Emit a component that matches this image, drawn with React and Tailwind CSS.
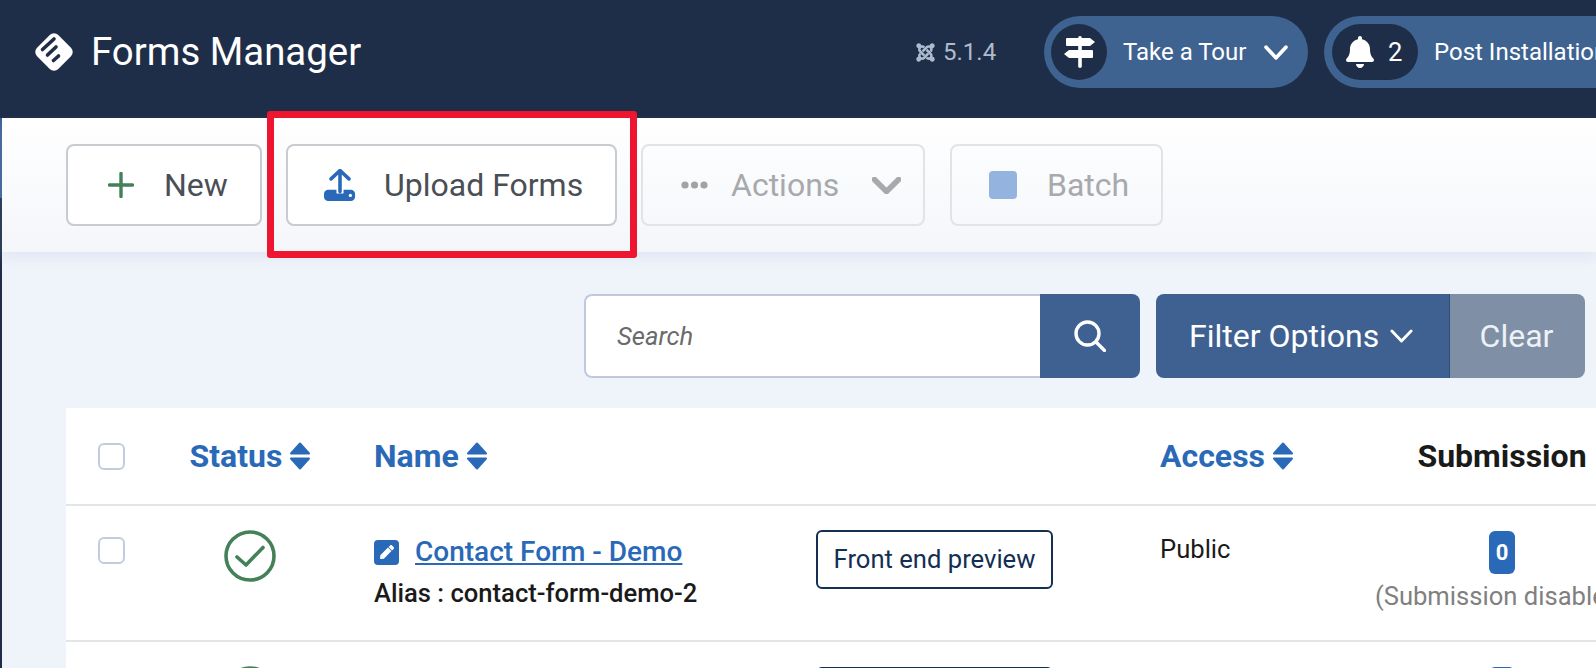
import React from "react";
import { FaBell, FaJoomla, FaPen } from "react-icons/fa";

const Chevron = ({ className, sw = 3.5 }) => (
  <svg viewBox="0 0 24 14" className={className} fill="none" stroke="currentColor" strokeWidth={sw} strokeLinecap="round" strokeLinejoin="round" preserveAspectRatio="none">
    <path d="M2 2 L12 12 L22 2" />
  </svg>
);

const Sort = () => (
  <svg viewBox="0 0 20 28" className="w-[20px] h-[28px] shrink-0 text-[#2a69b8]" fill="currentColor" stroke="currentColor" strokeWidth="2" strokeLinejoin="round">
    <path d="M10 1.5 L19 11.5 H1 Z" />
    <path d="M1 16.5 H19 L10 26.5 Z" />
  </svg>
);

const Logo = () => (
  <svg viewBox="0 0 40 40" className="w-[40px] h-[40px] shrink-0">
    <rect x="5" y="5" width="30" height="30" rx="6" transform="rotate(45 20 20)" fill="#fff" />
    <g stroke="#1f2e48" strokeWidth="3.6" strokeLinecap="round">
      <path d="M8.5 17.5 L20 7" />
      <path d="M13.5 23 L22 15" />
      <path d="M19.5 28.5 L24.5 24" />
    </g>
  </svg>
);

const UploadIcon = () => (
  <svg viewBox="7 7 34 35" className="w-[32px] h-[33px] shrink-0">
    <rect x="7" y="29" width="33" height="12" rx="4.5" fill="#2a69b8" />
    <path d="M24 33 V9" stroke="#fff" strokeWidth="7.5" />
    <path d="M24 31 V9 M14.5 17.5 L24 8.5 L33.5 17.5" fill="none" stroke="#2a69b8" strokeWidth="3.8" strokeLinecap="round" strokeLinejoin="round" />
    <circle cx="35" cy="35" r="1.7" fill="#fff" />
  </svg>
);

const SignIcon = () => (
  <svg viewBox="0 0 31 32" className="w-[31px] h-[32px]" fill="#fff">
    <rect x="14.2" y="0" width="3.6" height="32" rx="1.8" />
    <path d="M3 2 H26 L31 6 L26 10 H3 a1 1 0 0 1 -1 -1 V3 a1 1 0 0 1 1 -1 Z" />
    <path d="M5 14 H28 a1 1 0 0 1 1 1 V21 a1 1 0 0 1 -1 1 H5 L0 18 Z" />
  </svg>
);

const CheckCircle = () => (
  <svg viewBox="0 0 52 52" className="w-[52px] h-[52px]" fill="none" stroke="#448058">
    <circle cx="26" cy="26" r="24" strokeWidth="3.6" />
    <path d="M13 27 L22 35 L39 17.5" strokeWidth="3.6" strokeLinecap="round" strokeLinejoin="round" />
  </svg>
);

const Checkbox = () => (
  <span className="block w-[27px] h-[27px] bg-white border-2 border-[#c5cbdf] rounded-[6px]" />
);

const Preview = () => (
  <span className="flex items-center justify-center w-[237px] h-[59px] border-2 border-[#132f53] rounded-[6px] text-[#132f53] text-[25.6px]">
    Front end preview
  </span>
);

const Badge = () => (
  <span className="flex items-center justify-center w-[26px] h-[43px] rounded-[6px] bg-[#2a69b8] text-white text-[22px] font-bold">0</span>
);

const gridCols = "grid grid-cols-[60px_248px_442px_344px_215px_254px]";

export default function App() {
  return (
    <div className="relative flex w-[1596px] h-[668px] overflow-hidden bg-[#eff3fa] font-[Roboto,sans-serif]">
      <div className="flex flex-col w-[2px] shrink-0 bg-[#1f2e48]">
        <div className="h-[118px] shrink-0" />
        <div className="h-[80px] shrink-0 bg-[#3b6098]" />
      </div>

      <div className="flex flex-col flex-1 min-w-0">
        <header className="flex items-center h-[118px] pt-[16px] pb-[30px] shrink-0 bg-[#1f2e48] text-white">
          <div className="ml-[32px] shrink-0"><Logo /></div>
          <h1 className="ml-[17px] w-[269px] shrink-0 whitespace-nowrap text-[38.4px] leading-none font-normal">Forms Manager</h1>
          <div className="ml-[555px] w-[81px] flex items-center gap-[7px] text-[#aebbce] text-[24px] shrink-0">
            <FaJoomla className="w-[21px] h-[21px] shrink-0" />
            <span>5.1.4</span>
          </div>
          <div className="ml-[48px] flex items-center w-[264px] h-[72px] shrink-0 rounded-full bg-[#3f6391]">
            <span className="ml-[7px] flex items-center justify-center w-[56px] h-[56px] shrink-0 rounded-full bg-[#1f2e48]"><SignIcon /></span>
            <span className="ml-[16px] text-[24px] whitespace-nowrap">Take a Tour</span>
            <Chevron className="ml-[18px] w-[24px] h-[15px] shrink-0" />
          </div>
          <div className="ml-[16px] flex items-center w-[400px] h-[72px] shrink-0 rounded-full bg-[#3f6391]">
            <span className="ml-[8px] flex items-center w-[86px] h-[56px] shrink-0 rounded-full bg-[#1f2e48]">
              <FaBell className="ml-[14px] w-[28px] h-[32px] shrink-0" />
              <span className="ml-[14px] text-[25.6px]">2</span>
            </span>
            <span className="ml-[16px] text-[24px] whitespace-nowrap">Post Installation Messages</span>
          </div>
        </header>

        <div className="flex items-start h-[134px] shrink-0 pt-[26px] pl-[64px] bg-gradient-to-b from-white to-[#f4f6fa] shadow-[0_6px_10px_rgba(190,200,225,0.25)]">
          <button className="flex items-center w-[196px] h-[82px] pl-[40px] bg-white border-2 border-[#c8cbcf] rounded-[8px] text-[#4a4f55] text-[32px]">
            <svg viewBox="0 0 26 26" className="w-[26px] h-[26px] shrink-0" stroke="#448058" strokeWidth="3.4" strokeLinecap="round"><path d="M13 1.5 V24.5 M1.5 13 H24.5" /></svg>
            <span className="ml-[30px]">New</span>
          </button>
          <button className="ml-[24px] flex items-center w-[331px] h-[82px] pl-[36px] bg-white border-2 border-[#c8cbcf] rounded-[8px] text-[#4a4f55] text-[32px]">
            <UploadIcon />
            <span className="ml-[28px] whitespace-nowrap">Upload Forms</span>
          </button>
          <button className="ml-[24px] flex items-center w-[284px] h-[82px] pl-[38px] border-2 border-[#e1e3e7] rounded-[8px] text-[#a7a9ac] text-[32px]">
            <svg viewBox="0 0 27 8" className="w-[27px] h-[8px] shrink-0" fill="#a0a2a5"><circle cx="4" cy="4" r="3.6" /><circle cx="13.5" cy="4" r="3.6" /><circle cx="23" cy="4" r="3.6" /></svg>
            <span className="ml-[23px]">Actions</span>
            <Chevron sw={4.6} className="ml-[33px] w-[29px] h-[17px] shrink-0" />
          </button>
          <button className="ml-[25px] flex items-center w-[213px] h-[82px] pl-[37px] border-2 border-[#e1e3e7] rounded-[8px] text-[#a7a9ac] text-[32px]">
            <span className="block w-[28px] h-[28px] rounded-[4px] bg-[#94b4df] shrink-0" />
            <span className="ml-[30px]">Batch</span>
          </button>
        </div>

        <div className="flex items-start justify-end h-[156px] pt-[42px] pr-[11px] shrink-0">
          <div className="flex h-[84px]">
            <input
              placeholder="Search"
              className="w-[456px] h-full pl-[31px] bg-white border-2 border-r-0 border-[#c2c8de] rounded-l-[8px] text-[25.6px] placeholder:italic placeholder:text-[#6b6b6b] outline-none"
            />
            <button className="flex items-center justify-center w-[100px] h-full bg-[#3f6191] rounded-r-[8px] text-white">
              <svg viewBox="0 0 32 32" className="w-[32px] h-[32px]" fill="none" stroke="currentColor" strokeWidth="3.4" strokeLinecap="round"><circle cx="13.5" cy="13.5" r="11.5" /><path d="M22 22 L30.5 30.5" /></svg>
            </button>
          </div>
          <div className="ml-[16px] flex h-[84px]">
            <button className="flex items-center w-[294px] h-full pl-[33px] bg-[#3f6191] border-r border-[#2f4d78] rounded-l-[8px] text-white text-[32px] whitespace-nowrap">
              Filter Options
              <Chevron sw={3} className="ml-[11px] w-[23px] h-[14px] shrink-0" />
            </button>
            <button className="flex items-center justify-center w-[135px] h-full pr-[2px] bg-[#7f90a6] rounded-r-[8px] text-[#eef1f5] text-[32px]">Clear</button>
          </div>
        </div>

        <div className="ml-[64px] bg-white flex-1 min-h-0">
          <div className={`${gridCols} h-[98px] border-b-2 border-[#e3e4e6] items-center text-[32px] font-bold`}>
            <div className="pl-[32px]"><Checkbox /></div>
            <div className="flex justify-center items-center gap-[8px] text-[#2a69b8]">Status <Sort /></div>
            <div className="flex items-center gap-[8px] text-[#2a69b8]">Name <Sort /></div>
            <div />
            <div className="flex items-center gap-[8px] text-[#2a69b8]">Access <Sort /></div>
            <div className="text-center text-[#1a1a1a]">Submission</div>
          </div>
          <div className={`${gridCols} h-[136px] border-b-2 border-[#e3e4e6] pt-[24px] text-[25.6px]`}>
            <div className="pl-[32px] pt-[7px]"><Checkbox /></div>
            <div className="flex justify-center"><CheckCircle /></div>
            <div className="pt-[8px]">
              <div className="flex items-center">
                <span className="flex items-center justify-center w-[25px] h-[25px] rounded-[4px] bg-[#2a69b8] text-white"><FaPen className="w-[14px] h-[14px]" /></span>
                <a className="ml-[16px] text-[#2a69b8] font-medium underline text-[28px] leading-none">Contact Form - Demo</a>
              </div>
              <div className="mt-[15px] font-medium text-[#1a1a1a] text-[25.6px] leading-none">Alias : contact-form-demo-2</div>
            </div>
            <div><Preview /></div>
            <div className="pt-[7px] text-[#1a1a1a] leading-none">Public</div>
            <div className="flex flex-col items-center whitespace-nowrap">
              <span className="pt-[1px]"><Badge /></span>
              <span className="text-[#808080] leading-none mt-[10px]">(Submission disabled)</span>
            </div>
          </div>
          <div className={`${gridCols} pt-[24px]`}>
            <div />
            <div className="flex justify-center"><CheckCircle /></div>
            <div />
            <div className="pt-[1px]"><Preview /></div>
            <div />
            <div className="flex justify-center pt-[1px]"><Badge /></div>
          </div>
        </div>
      </div>

      <div className="absolute left-[267px] top-[111px] w-[370px] h-[147px] border-[7px] border-[#ed1530] rounded-[3px] pointer-events-none" />
    </div>
  );
}
